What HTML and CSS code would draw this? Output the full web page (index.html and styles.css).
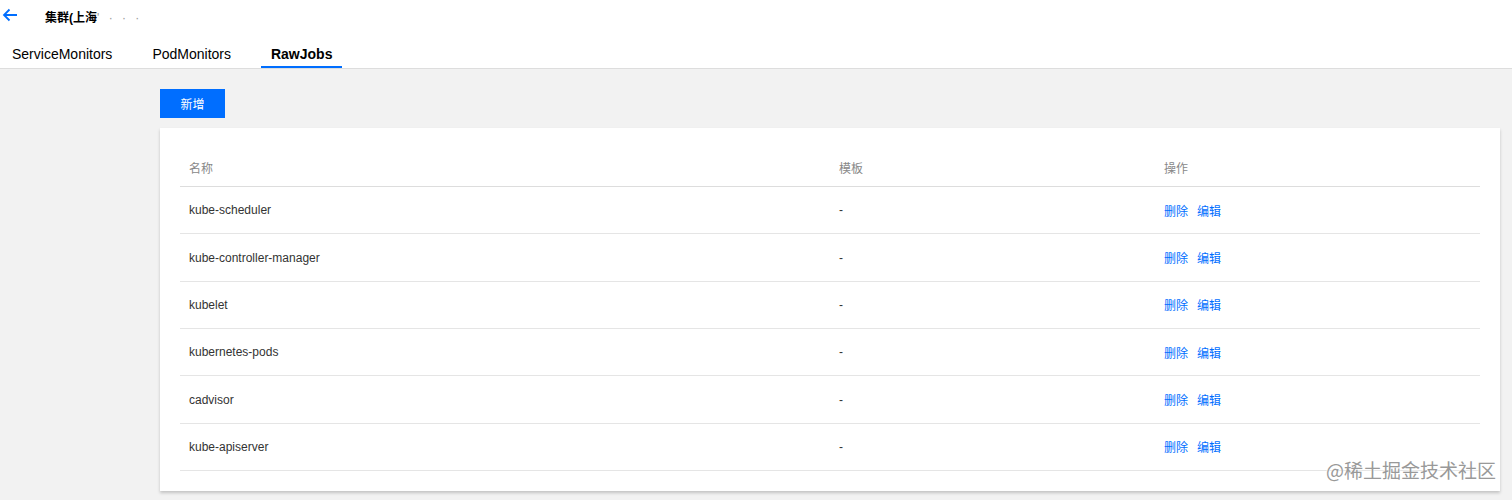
FILE: index.html
```html
<!DOCTYPE html>
<html lang="zh">
<head>
<meta charset="utf-8">
<title>RawJobs</title>
<link rel="stylesheet" href="styles.css">
</head>
<body>
<header class="topbar">
  <svg class="back" width="16" height="14" viewBox="0 0 16 14"><path d="M15 7H2M7.5 1.5L2 7l5.5 5.5" fill="none" stroke="#006eff" stroke-width="1.8"/></svg>
  <span class="title">集群(上海<span class="redact">' · · ·</span></span>
</header>
<nav class="tabs">
  <a class="tab">ServiceMonitors</a>
  <a class="tab">PodMonitors</a>
  <a class="tab active">RawJobs</a>
</nav>
<main class="content">
  <button class="btn-primary">新增</button>
  <section class="card">
    <table class="table">
      <thead>
        <tr><th class="c1">名称</th><th class="c2">模板</th><th class="c3">操作</th></tr>
      </thead>
      <tbody>
        <tr><td>kube-scheduler</td><td>-</td><td><a class="link">删除</a><a class="link">编辑</a></td></tr>
        <tr><td>kube-controller-manager</td><td>-</td><td><a class="link">删除</a><a class="link">编辑</a></td></tr>
        <tr><td>kubelet</td><td>-</td><td><a class="link">删除</a><a class="link">编辑</a></td></tr>
        <tr><td>kubernetes-pods</td><td>-</td><td><a class="link">删除</a><a class="link">编辑</a></td></tr>
        <tr><td>cadvisor</td><td>-</td><td><a class="link">删除</a><a class="link">编辑</a></td></tr>
        <tr><td>kube-apiserver</td><td>-</td><td><a class="link">删除</a><a class="link">编辑</a></td></tr>
      </tbody>
    </table>
  </section>
</main>
<div class="watermark">@稀土掘金技术社区</div>
</body>
</html>
```
FILE: styles.css
```css
html, body {
  margin: 0;
  padding: 0;
}
body {
  background: #f2f2f2;
  font-family: "Liberation Sans", Arial, "Noto Sans CJK SC", sans-serif;
  color: #000;
  height: 500px;
  overflow: hidden;
  position: relative;
}
.topbar {
  background: #fff;
  height: 34px;
  display: flex;
  align-items: center;
  padding-left: 2px;
  box-sizing: border-box;
  padding-bottom: 2px;
}
.back {
  display: block;
  margin-top: -3px;
}
.title {
  margin-left: 27px;
  font-size: 12px;
  font-weight: bold;
  color: #000;
}
.redact {
  color: #999;
  font-weight: normal;
  letter-spacing: 3px;
}
.tabs {
  background: #fff;
  display: flex;
  gap: 20px;
  padding-left: 2px;
  border-bottom: 1px solid #ddd;
}
.tab {
  font-size: 14px;
  padding: 10px 10px 2px;
  line-height: 20px;
  color: #000;
  border-bottom: 2px solid transparent;
}
.tab.active {
  font-weight: bold;
  border-bottom-color: #006eff;
}
.content {
  padding: 20px 12px 0 160px;
}
.btn-primary {
  display: block;
  background: #006eff;
  color: #fff;
  border: none;
  font-family: inherit;
  font-size: 12px;
  width: 65px;
  height: 29px;
  padding: 0;
  margin: 0;
}
.card {
  margin-top: 10px;
  background: #fff;
  padding: 20px;
  box-shadow: 0 2px 3px rgba(0,0,0,0.2);
}
.table {
  width: 1300px;
  border-collapse: collapse;
  font-size: 12px;
  table-layout: fixed;
}
.table th {
  text-align: left;
  font-weight: normal;
  color: #888;
  height: 38px;
  padding: 0 9px;
  border-bottom: 1px solid #ddd;
  vertical-align: middle;
}
.c1 { width: 632px; }
.c2 { width: 307px; }
.table td {
  height: 46.35px;
  padding: 0 9px;
  border-bottom: 1px solid #e5e5e5;
  color: #333;
  vertical-align: middle;
}
.link {
  color: #006eff;
  margin-right: 9px;
}
.watermark {
  position: absolute;
  right: 16px;
  top: 456px;
  font-size: 19px;
  color: #999;
  font-family: "Noto Sans CJK SC", sans-serif;
  text-shadow: 0 0 2px #fff, 0 0 2px #fff;
}
```
